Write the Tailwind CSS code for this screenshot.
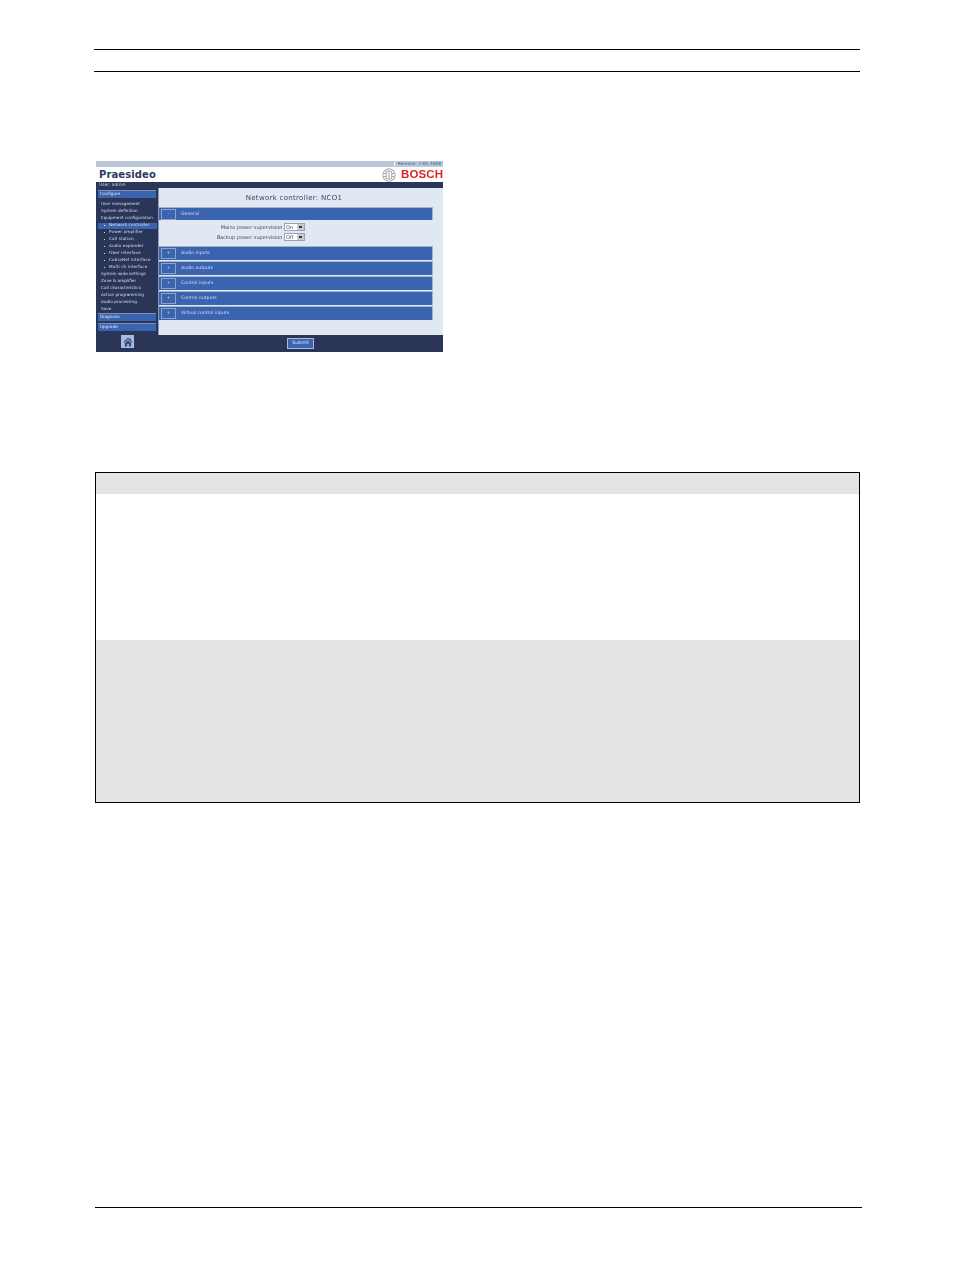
<!DOCTYPE html>
<html>
<head>
<meta charset="utf-8">
<script src="https://cdn.jsdelivr.net/npm/@tailwindcss/browser@4"></script>
</head>
<body class="bg-white w-[954px] h-[1273px] overflow-hidden font-['DejaVu_Sans',sans-serif]">
<div class="flex flex-col pt-[49px]">
  <div class="ml-[94px] w-[766px] h-px bg-black"></div>
  <div class="ml-[94px] w-[766px] h-px bg-black mt-[21px]"></div>

  <!-- app screenshot -->
  <div class="ml-[96px] mt-[89px] w-[347px] h-[191px] flex flex-col leading-none blur-[0.3px]">
    <div class="h-[6px] bg-[#b9c7d9] flex justify-end items-center pr-[2px]">
      <span class="text-[4.3px] text-[#4a5a80] border-l border-white pl-[3px] tracking-[0.1px]">Release: 2.60.3468</span>
    </div>
    <div class="h-[15px] flex items-center justify-between bg-white">
      <span class="ml-[3px] text-[10px] font-semibold text-[#2b3a63] tracking-[0.1px]">Praesideo</span>
      <div class="flex items-center gap-[5px]">
        <svg class="w-[14px] h-[14px]" viewBox="0 0 14 14" fill="none" stroke="#a8abb0" stroke-width="1.1">
          <circle cx="7" cy="7" r="6.2"/>
          <path d="M1.5 5.5H4.2M9.8 5.5H12.5M1.5 8.5H4.2M9.8 8.5H12.5"/>
          <rect x="4.2" y="3" width="5.6" height="8" rx="1.6"/>
          <path d="M7 3V11"/>
        </svg>
        <span class="font-['Liberation_Sans',sans-serif] font-bold text-[11.5px] tracking-[0.1px] text-[#d9232e] w-[42px]">BOSCH</span>
      </div>
    </div>
    <div class="h-[6px] bg-[#2a3558] text-[4.4px] text-[#c8d2e6] pl-[3px] flex items-center">User: admin</div>
    <div class="flex h-[147px]">
      <!-- sidebar -->
      <div class="w-[63px] bg-[#2a3558] flex flex-col text-[4.2px] text-[#d5ddee] pt-[2px] border-r border-[#8a97b5]">
        <div class="h-[8px] mx-[2px] bg-[#3a63b0] border-t border-[#7d8fb5] flex items-center pl-[2px] text-[#dfe6f5]">Configure</div>
        <div class="flex flex-col mt-[3px]">
          <div class="h-[7px] flex items-center pl-[5px]">User management</div>
          <div class="h-[7px] flex items-center pl-[5px]">System definition</div>
          <div class="h-[7px] flex items-center pl-[5px]">Equipment configuration</div>
          <div class="h-[6px] my-[0.5px] ml-[2px] mr-[1px] bg-[#3a63b0] flex items-center pl-[6px] gap-[4px] tracking-[0.1px]"><span class="w-[1px] h-[1px] bg-white"></span>Network controller</div>
          <div class="h-[7px] flex items-center pl-[8px] gap-[4px] tracking-[0.1px]"><span class="w-[1px] h-[1px] bg-[#d5ddee]"></span>Power amplifier</div>
          <div class="h-[7px] flex items-center pl-[8px] gap-[4px] tracking-[0.1px]"><span class="w-[1px] h-[1px] bg-[#d5ddee]"></span>Call station</div>
          <div class="h-[7px] flex items-center pl-[8px] gap-[4px] tracking-[0.1px]"><span class="w-[1px] h-[1px] bg-[#d5ddee]"></span>Audio expander</div>
          <div class="h-[7px] flex items-center pl-[8px] gap-[4px] tracking-[0.1px]"><span class="w-[1px] h-[1px] bg-[#d5ddee]"></span>Fiber interface</div>
          <div class="h-[7px] flex items-center pl-[8px] gap-[4px] tracking-[0.1px]"><span class="w-[1px] h-[1px] bg-[#d5ddee]"></span>CobraNet interface</div>
          <div class="h-[7px] flex items-center pl-[8px] gap-[4px] tracking-[0.1px]"><span class="w-[1px] h-[1px] bg-[#d5ddee]"></span>Multi ch interface</div>
          <div class="h-[7px] flex items-center pl-[5px]">System wide settings</div>
          <div class="h-[7px] flex items-center pl-[5px]">Zone &amp; amplifier</div>
          <div class="h-[7px] flex items-center pl-[5px]">Call characteristics</div>
          <div class="h-[7px] flex items-center pl-[5px]">Action programming</div>
          <div class="h-[7px] flex items-center pl-[5px]">Audio processing</div>
          <div class="h-[7px] flex items-center pl-[5px]">Save</div>
        </div>
        <div class="h-[8px] mx-[2px] bg-[#3a63b0] border-t border-[#7d8fb5] flex items-center pl-[2px] text-[#dfe6f5]">Diagnose</div>
        <div class="h-[8px] mx-[2px] mt-[2px] bg-[#3a63b0] border-t border-[#7d8fb5] flex items-center pl-[2px] text-[#dfe6f5]">Upgrade</div>
      </div>
      <!-- content -->
      <div class="flex-1 bg-[#e0e8f4] flex flex-col">
        <div class="h-[19px] pt-[1px] flex items-center justify-center text-[7px] text-[#3a4560] tracking-[0.3px] pr-[14px]">Network controller: NCO1</div>
        <div class="w-[274px] h-[13px] bg-[#3a63b0] border-t border-[#a9b4c6] border-r flex items-center text-[4.6px] text-[#d5def0]">
          <span class="ml-[2px] w-[15px] h-[11px] border border-[#8fa3c8] flex items-center justify-center">-</span>
          <span class="ml-[5px]">General</span>
        </div>
        <div class="flex flex-col text-[5px] text-[#444c5e] pt-[3px] h-[26px] gap-[2px]">
          <div class="h-[8px] flex items-center justify-end pr-[138px] gap-[1.5px]">Mains power supervision
            <span class="w-[21px] h-[8px] bg-white border border-[#9aa3b0] flex items-center justify-between pl-[1px]">On<span class="w-[7px] h-[6px] bg-[#c9ccd2] flex items-center justify-center"><span class="w-[3px] h-[2px] bg-[#333]"></span></span></span>
          </div>
          <div class="h-[8px] flex items-center justify-end pr-[138px] gap-[1.5px]">Backup power supervision
            <span class="w-[21px] h-[8px] bg-white border border-[#9aa3b0] flex items-center justify-between pl-[1px]">Off<span class="w-[7px] h-[6px] bg-[#c9ccd2] flex items-center justify-center"><span class="w-[3px] h-[2px] bg-[#333]"></span></span></span>
          </div>
        </div>
        <div class="flex flex-col gap-px w-[274px] text-[4.6px] text-[#d5def0]">
          <div class="h-[14px] bg-[#3a63b0] border-t border-r border-[#a9b4c6] flex items-center"><span class="ml-[2px] w-[15px] h-[11px] border border-[#8fa3c8] flex items-center justify-center">+</span><span class="ml-[5px]">Audio inputs</span></div>
          <div class="h-[14px] bg-[#3a63b0] border-t border-r border-[#a9b4c6] flex items-center"><span class="ml-[2px] w-[15px] h-[11px] border border-[#8fa3c8] flex items-center justify-center">+</span><span class="ml-[5px]">Audio outputs</span></div>
          <div class="h-[14px] bg-[#3a63b0] border-t border-r border-[#a9b4c6] flex items-center"><span class="ml-[2px] w-[15px] h-[11px] border border-[#8fa3c8] flex items-center justify-center">+</span><span class="ml-[5px]">Control inputs</span></div>
          <div class="h-[14px] bg-[#3a63b0] border-t border-r border-[#a9b4c6] flex items-center"><span class="ml-[2px] w-[15px] h-[11px] border border-[#8fa3c8] flex items-center justify-center">+</span><span class="ml-[5px]">Control outputs</span></div>
          <div class="h-[14px] bg-[#3a63b0] border-t border-r border-[#a9b4c6] flex items-center"><span class="ml-[2px] w-[15px] h-[11px] border border-[#8fa3c8] flex items-center justify-center">+</span><span class="ml-[5px]">Virtual control inputs</span></div>
        </div>
      </div>
    </div>
    <div class="h-[17px] bg-[#2a3558] flex items-start">
      <div class="ml-[25px] w-[13px] h-[13px] bg-[#a9bcd8] flex items-center justify-center">
        <svg class="w-[10px] h-[10px]" viewBox="0 0 10 10" fill="#2d4f8e"><path d="M5 .8 .3 5l.7.7L5 2.3l4 3.4.7-.7L7.8 3.3V1.2H6.7v1.1zM1.8 6v3.4h2.4V7h1.6v2.4h2.4V6L5 3.2z"/></svg>
      </div>
      <div class="ml-[153px] mt-[3px] w-[27px] h-[11px] bg-[#3a63b0] border border-[#a9b9d6] flex items-center justify-center text-[4.8px] text-[#dbe3f3]">Submit</div>
    </div>
  </div>

  <!-- table -->
  <div class="ml-[95px] mt-[120px] w-[765px] h-[331px] border border-black flex flex-col">
    <div class="h-[21px] bg-[#e4e4e4]"></div>
    <div class="h-[146px] bg-white"></div>
    <div class="flex-1 bg-[#e4e4e4]"></div>
  </div>

  <div class="ml-[95px] mt-[404px] w-[767px] h-px bg-black"></div>
</div>
</body>
</html>
